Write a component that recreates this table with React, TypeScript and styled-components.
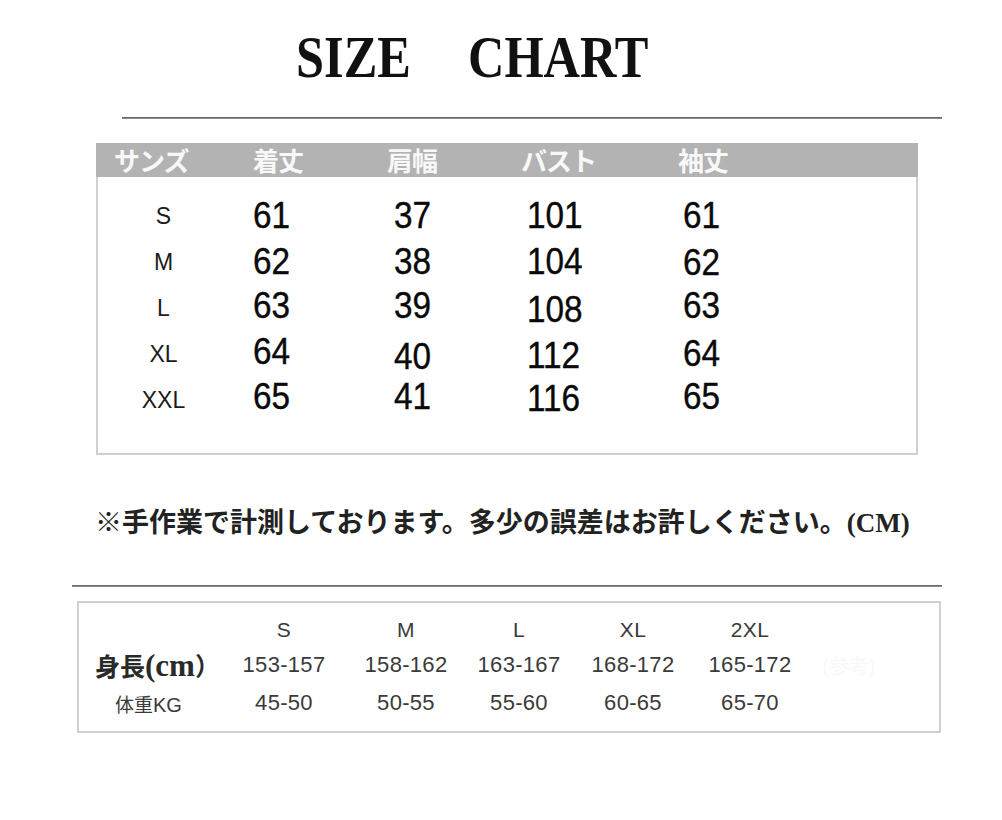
import React from "react";
import styled, { createGlobalStyle } from "styled-components";

const GlobalStyle = createGlobalStyle`
  html, body { margin: 0; padding: 0; background: #ffffff; }
  body { font-family: "Liberation Sans", Arial, sans-serif; }
`;

const SANS = `"Liberation Sans", Arial, sans-serif`;
const CJK = `"Noto Sans CJK JP", "Noto Sans CJK SC", sans-serif`;
const SERIF = `"Liberation Serif", "Noto Sans CJK JP", serif`;

const Page = styled.div`
  width: 1002px;
  height: 820px;
  display: flex;
  flex-direction: column;
  background: #fff;
  overflow: hidden;
`;

const TitleRow = styled.div`
  margin-top: 27px;
  padding-left: 296px;
  height: 60px;
`;

const Title = styled.h1`
  margin: 0;
  display: flex;
  gap: 68px;
  font-family: ${SERIF};
  font-weight: 700;
  font-size: 60px;
  line-height: 60px;
  color: #111;
  transform: scaleX(0.84);
  transform-origin: left center;
  white-space: nowrap;
`;

const Rule = styled.div<{ $top: number; $left: number; $width: number }>`
  margin-top: ${(p) => p.$top}px;
  margin-left: ${(p) => p.$left}px;
  width: ${(p) => p.$width}px;
  height: 2px;
  background: linear-gradient(#5a5a5a, #9a9a9a);
`;

const SizeBox = styled.div`
  margin-top: 24px;
  margin-left: 96px;
  width: 822px;
  height: 312px;
  box-sizing: border-box;
  border: 2px solid #d0d0d0;
  border-top: 0;
  display: flex;
  flex-direction: column;
`;

const HeaderBar = styled.div`
  height: 34px;
  margin: 0 -2px;
  background: #b3b3b3;
  display: grid;
  grid-template-columns: 139px 134px 134px 157px 1fr;
  padding-left: 18px;
  align-items: center;
`;

const HeaderCell = styled.div`
  font-family: ${CJK};
  font-weight: 700;
  font-size: 26px;
  line-height: 34px;
  color: #f8f8f8;
  letter-spacing: -1px;
  white-space: nowrap;
`;

const DataGrid = styled.div`
  margin-top: 16px;
  display: grid;
  grid-template-columns: 155px 141px 133px 156px 1fr;
  grid-auto-rows: 46px;
  align-items: center;
`;

const SizeLabel = styled.div`
  font-family: ${SANS};
  font-size: 23px;
  line-height: 46px;
  color: #1a1a1a;
  text-align: center;
  padding-right: 24px;
`;

const Num = styled.div<{ $dy?: number }>`
  font-family: ${SANS};
  font-size: 37px;
  line-height: 46px;
  color: #0a0a0a;
  -webkit-text-stroke: 0.4px #0a0a0a;
  transform: translateY(${(p) => p.$dy ?? 0}px) scaleX(0.9);
  transform-origin: left center;
  white-space: nowrap;
`;

const Note = styled.p`
  margin: 48px 0 0 95px;
  font-family: ${CJK};
  font-weight: 700;
  font-size: 27px;
  line-height: 36px;
  color: #222;
  white-space: nowrap;
`;

const NoteLatin = styled.span`
  font-family: ${SERIF};
  font-weight: 700;
`;

const BodyBox = styled.div`
  margin-top: 14px;
  margin-left: 77px;
  width: 864px;
  box-sizing: border-box;
  border: 2px solid #d0d0d0;
  padding: 8px 0 6px;
  display: grid;
  grid-template-columns: 145px 120px 124px 102px 126px 108px 1fr;
  grid-template-rows: 38px 32px 44px;
  align-items: center;
`;

const BodyCell = styled.div<{ $size?: number }>`
  font-family: ${SANS};
  font-size: ${(p) => p.$size ?? 21}px;
  color: #3a3a3a;
  text-align: center;
  white-space: nowrap;
  letter-spacing: 0.3px;
`;

const LabelBold = styled.div`
  font-family: ${CJK};
  font-weight: 700;
  font-size: 25px;
  color: #2a2a2a;
  padding-left: 16px;
  white-space: nowrap;
`;

const LabelSerif = styled.span`
  font-family: ${SERIF};
  font-weight: 700;
  font-size: 31px;
`;

const LabelPlain = styled.div`
  font-family: ${CJK};
  font-size: 19px;
  color: #3a3a3a;
  padding-left: 36px;
  white-space: nowrap;
`;

const LabelPlainLatin = styled.span`
  font-family: ${SANS};
  font-size: 20px;
`;

const Ghost = styled.div`
  font-family: ${CJK};
  font-size: 20px;
  color: #f8f8f8;
  padding-left: 18px;
  white-space: nowrap;
`;

type Cell = { v: string; dy?: number };

const sizes = ["S", "M", "L", "XL", "XXL"];
const rows: Cell[][] = [
  [{ v: "61" }, { v: "37" }, { v: "101" }, { v: "61" }],
  [{ v: "62" }, { v: "38" }, { v: "104" }, { v: "62", dy: 1 }],
  [{ v: "63", dy: -2 }, { v: "39", dy: -2 }, { v: "108", dy: 2 }, { v: "63", dy: -2 }],
  [{ v: "64", dy: -2 }, { v: "40", dy: 3 }, { v: "112", dy: 2 }, { v: "64" }],
  [{ v: "65", dy: -3 }, { v: "41", dy: -3 }, { v: "116", dy: -1 }, { v: "65", dy: -3 }],
];

const headers = ["サンズ", "着丈", "肩幅", "バスト", "袖丈"];

const bodySizes = ["S", "M", "L", "XL", "2XL"];
const heights = ["153-157", "158-162", "163-167", "168-172", "165-172"];
const weights = ["45-50", "50-55", "55-60", "60-65", "65-70"];

export default function App() {
  return (
    <>
      <GlobalStyle />
      <Page>
        <TitleRow>
          <Title>
            <span>SIZE</span>
            <span>CHART</span>
          </Title>
        </TitleRow>
        <Rule $top={30} $left={122} $width={820} />

        <SizeBox>
          <HeaderBar>
            {headers.map((h) => (
              <HeaderCell key={h}>{h}</HeaderCell>
            ))}
          </HeaderBar>
          <DataGrid>
            {sizes.map((s, i) => (
              <React.Fragment key={s}>
                <SizeLabel>{s}</SizeLabel>
                {rows[i].map((c, j) => (
                  <Num key={j} $dy={c.dy}>
                    {c.v}
                  </Num>
                ))}
              </React.Fragment>
            ))}
          </DataGrid>
        </SizeBox>

        <Note>
          ※手作業で計測しております。多少の誤差はお許しください。
          <NoteLatin>(CM)</NoteLatin>
        </Note>

        <Rule $top={44} $left={72} $width={870} />

        <BodyBox>
          <div />
          {bodySizes.map((s) => (
            <BodyCell key={s} $size={21}>
              {s}
            </BodyCell>
          ))}
          <div />

          <LabelBold>
            身長<LabelSerif>(cm</LabelSerif>）
          </LabelBold>
          {heights.map((h) => (
            <BodyCell key={h} $size={22}>
              {h}
            </BodyCell>
          ))}
          <Ghost>(参考)</Ghost>

          <LabelPlain>
            体重<LabelPlainLatin>KG</LabelPlainLatin>
          </LabelPlain>
          {weights.map((w) => (
            <BodyCell key={w} $size={22}>
              {w}
            </BodyCell>
          ))}
          <div />
        </BodyBox>
      </Page>
    </>
  );
}
